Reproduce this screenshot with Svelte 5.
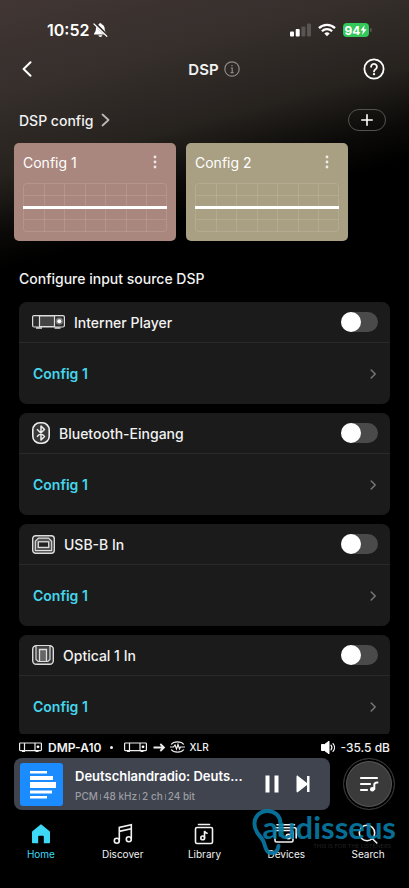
<script lang="ts">
	interface Source {
		id: string;
		name: string;
		config: string;
		enabled: boolean;
	}

	const configs = [
		{ name: 'Config 1', tone: 'rose' },
		{ name: 'Config 2', tone: 'sand' }
	];

	let sources = $state<Source[]>([
		{ id: 'player', name: 'Interner Player', config: 'Config 1', enabled: false },
		{ id: 'bluetooth', name: 'Bluetooth-Eingang', config: 'Config 1', enabled: false },
		{ id: 'usb', name: 'USB-B In', config: 'Config 1', enabled: false },
		{ id: 'optical', name: 'Optical 1 In', config: 'Config 1', enabled: false }
	]);

	const format = ['PCM', '48 kHz', '2 ch', '24 bit'];
	const tabs = ['Home', 'Discover', 'Library', 'Devices', 'Search'];
	let activeTab = $state('Home');
</script>

{#snippet device()}
	<svg class="line" width="23" height="11" viewBox="0 0 23 11" aria-hidden="true">
		<rect x="0.6" y="1" width="21.8" height="7.6" rx="0.8" />
		<path d="M5.5 1v7.6M16 1v7.6M3 9.4h3M16.5 9.4h3" />
		<circle cx="19" cy="4.8" r="1.4" fill="#fff" stroke="none" />
	</svg>
{/snippet}

<div class="screen">
	<div class="scroll">
		<div class="status">
			<div class="clock">
				<span>10:52</span>
				<svg width="15" height="16" viewBox="0 0 15 16" aria-hidden="true">
					<path d="M7.3 1.2c.9 0 1.3.5 1.4 1.1 2 .7 2.9 2.2 3 4.4.1 2.5.8 3.6 1.8 4.7.4.5.1 1.1-.5 1.1H1.6c-.6 0-.9-.6-.5-1.1 1-1.1 1.7-2.2 1.8-4.7.1-2.2 1-3.7 3-4.4.1-.6.5-1.1 1.4-1.1zM5.4 13.3h3.9c-.2 1-.9 1.7-1.95 1.7s-1.75-.7-1.95-1.7z" fill="#fff" />
					<path d="M1.7 1.3l12.5 12.5" stroke="#362d2a" stroke-width="3" />
					<path d="M1 2l12.8 12.3" stroke="#fff" stroke-width="1.2" stroke-linecap="round" />
				</svg>
			</div>
			<div class="signals">
				<svg width="21" height="14" viewBox="0 0 21 14" aria-hidden="true">
					<rect x="0" y="8.5" width="4" height="5" rx="1" fill="#fff" />
					<rect x="5.7" y="6" width="4" height="7.5" rx="1" fill="#fff" />
					<rect x="11.4" y="3.5" width="4" height="10" rx="1" fill="#5a5552" />
					<rect x="17" y="0.5" width="4" height="13" rx="1" fill="#5a5552" />
				</svg>
				<svg width="18" height="14" viewBox="0 0 18 14" fill="none" stroke="#fff" stroke-width="2.3" aria-hidden="true">
					<path d="M1 5.1a11.3 11.3 0 0 1 16 0M3.9 8.2a7.2 7.2 0 0 1 10.2 0" />
					<path d="M9 13.3l-2.7-2.8a3.9 3.9 0 0 1 5.4 0z" fill="#fff" stroke="none" />
				</svg>
				<div class="battery">
					<span>94</span>
					<svg width="7" height="10" viewBox="0 0 7 10" aria-hidden="true"><path d="M4.6 0L.5 5.6h2.4L2.2 10l4.4-5.7H4z" fill="#fff" /></svg>
				</div>
			</div>
		</div>

		<header class="nav">
			<button class="icon-btn" aria-label="Back">
				<svg width="10" height="16" viewBox="0 0 10 16" fill="none" stroke="#fff" stroke-width="2" stroke-linecap="round" stroke-linejoin="round"><path d="M8.5 1.3L1.6 8l6.9 6.7" /></svg>
			</button>
			<h1>
				DSP
				<button class="icon-btn" aria-label="Info">
					<svg width="16" height="16" viewBox="0 0 16 16" fill="none" stroke="#8e8a87" stroke-width="1.2"><circle cx="8" cy="8" r="7.2" /><path d="M6.9 7h1.3v4.6M6.6 11.6h3.1M8 3.9v1.4" /></svg>
				</button>
			</h1>
			<button class="icon-btn" aria-label="Help">
				<svg width="22" height="22" viewBox="0 0 22 22" fill="none" stroke="#fff" stroke-width="1.8"><circle cx="11" cy="11" r="9.6" /><path d="M8.1 8.8a2.9 2.9 0 1 1 4.5 2.4c-1 .7-1.6 1.1-1.6 2.2" stroke-linecap="round" /><circle cx="11" cy="16.1" r="1.2" fill="#fff" stroke="none" /></svg>
			</button>
		</header>

		<div class="section-row">
			<a class="section-link" href="#configs">
				DSP config
				<svg width="9" height="14" viewBox="0 0 9 14" fill="none" stroke="#bab7b5" stroke-width="1.8" stroke-linecap="round" stroke-linejoin="round"><path d="M1.5 1.5L7.5 7l-6 5.5" /></svg>
			</a>
			<button class="add" aria-label="Add config">
				<svg width="12" height="12" viewBox="0 0 12 12" stroke="#fff" stroke-width="1.6" stroke-linecap="round"><path d="M6 .8v10.4M.8 6h10.4" /></svg>
			</button>
		</div>

		<div class="configs" id="configs">
			{#each configs as config}
				<article class="config {config.tone}">
					<div class="config-head">
						<h3>{config.name}</h3>
						<button class="icon-btn" aria-label="{config.name} options">
							<svg width="4" height="14" viewBox="0 0 4 14" fill="#fff" fill-opacity="0.8"><circle cx="2" cy="2" r="1.4" /><circle cx="2" cy="7" r="1.4" /><circle cx="2" cy="12" r="1.4" /></svg>
						</button>
					</div>
					<svg class="graph" viewBox="0 0 144 50" aria-hidden="true">
						<g fill="none" stroke="#fff" stroke-opacity="0.12">
							<rect x="0.5" y="0.5" width="143" height="48" rx="3" />
							{#each [1, 2, 3, 4, 5, 6] as col}
								<path d="M{Math.round(col * 20.5) + 0.5} 0.5v48" />
							{/each}
							<path d="M0.5 12.5h143M0.5 36.5h143" />
						</g>
						<path d="M0 24.5h144" stroke="#fff" stroke-width="3" />
					</svg>
				</article>
			{/each}
		</div>

		<h2>Configure input source DSP</h2>

		<div class="sources">
			{#each sources as source (source.id)}
				<section class="source">
					<label class="source-head">
						{#if source.id === 'player'}
							<svg width="33" height="14" viewBox="0 0 33 14" fill="none" stroke="#ddd" aria-hidden="true">
								<rect x="0.6" y="0.6" width="31.8" height="11.4" rx="1.5" fill="#2c2c2c" stroke-width="1.2" />
								<path d="M7.5 1h15v10.5h-15z" fill="#444" stroke-width="1.2" />
								<path d="M4 13h6M22.5 13h6" stroke-width="1.4" />
								<circle cx="27.3" cy="6.2" r="3.6" fill="#777" stroke="none" />
								<circle cx="27.3" cy="6.2" r="2" fill="#fff" stroke="none" />
							</svg>
						{:else if source.id === 'bluetooth'}
							<svg width="18" height="22" viewBox="0 0 18 22" fill="none" stroke="#eee" aria-hidden="true">
								<rect x="0.8" y="0.8" width="16.4" height="20.4" rx="7" fill="#3a3a3a" stroke-width="1.6" />
								<path d="M5 7.3l7.5 7.2L9 18V4l3.5 3.5L5 14.7" stroke-width="1.5" stroke-linejoin="round" />
							</svg>
						{:else if source.id === 'usb'}
							<svg width="23" height="19" viewBox="0 0 23 19" fill="none" stroke="#ddd" aria-hidden="true">
								<rect x="0.7" y="0.7" width="21.6" height="17.6" rx="3" fill="#333" stroke-width="1.4" />
								<path d="M3.3 15.6V6.3l3.2-3.2h10l3.2 3.2v9.3z" fill="#555" stroke-width="1.2" />
								<rect x="6.3" y="6.8" width="10.4" height="5.6" fill="#222" stroke-width="1.3" />
							</svg>
						{:else}
							<svg width="22" height="20" viewBox="0 0 22 20" fill="none" stroke="#ddd" aria-hidden="true">
								<rect x="0.7" y="0.7" width="20.6" height="18.6" rx="3.5" fill="#333" stroke-width="1.4" />
								<path d="M4 1v13.5l2.2 2h9.6l2.2-2V1" fill="#444" stroke-width="1.2" />
								<path d="M7.5 16V4.5h7V16" fill="#666" stroke-width="1.3" />
							</svg>
						{/if}
						<span>{source.name}</span>
						<input type="checkbox" role="switch" bind:checked={source.enabled} />
					</label>
					<button class="source-config">
						{source.config}
						<svg width="7" height="10" viewBox="0 0 7 10" fill="none" stroke="#777" stroke-width="1.5" stroke-linecap="round" stroke-linejoin="round"><path d="M1.2 1l4 4-4 4" /></svg>
					</button>
				</section>
			{/each}
		</div>
	</div>

	<footer>
		<div class="output">
			{@render device()}
			<strong>DMP-A10</strong>
			<span class="dot"></span>
			{@render device()}
			<svg class="line arrow" width="12" height="9" viewBox="0 0 12 9" aria-hidden="true"><path d="M0.5 4.5h10.5M7.3 1l3.7 3.5L7.3 8" /></svg>
			<svg class="line" width="15" height="12" viewBox="0 0 15 12" aria-hidden="true">
				<path d="M1.2 3.5C2.5 1.6 4.7.8 7.5.8s5 .8 6.3 2.7M1.2 8.5c1.3 1.9 3.5 2.7 6.3 2.7s5-.8 6.3-2.7M0 6h3.5L5 4l1.5 4L8 3.5 9.5 8l1-2H15" />
			</svg>
			<span class="port">XLR</span>
			<div class="volume">
				<svg width="15" height="13" viewBox="0 0 15 13" fill="none" stroke="#fff" aria-hidden="true">
					<path d="M0.5 3.5h3L8 .2v12.6L3.5 9.5h-3z" fill="#fff" stroke-linejoin="round" />
					<path d="M10 4.2c1 1.3 1 3.3 0 4.6M12 2.6c2 2.2 2 5.6 0 7.8" stroke-width="1.2" stroke-linecap="round" />
				</svg>
				-35.5 dB
			</div>
		</div>

		<div class="playback">
			<div class="player">
				<svg width="43" height="43" viewBox="0 0 43 43" aria-hidden="true">
					<rect width="43" height="43" rx="3" fill="#1a8cff" />
					<path d="M10 8h17v2.5H10zM10 13h23v4H10zM10 19h26v6H10zM10 27.5h22v3H10zM10 33h17v2.5H10z" fill="#fff" />
				</svg>
				<div class="track">
					<p class="title">Deutschlandradio: Deuts...</p>
					<p class="format">
						{#each format as part}<span>{part}</span>{/each}
					</p>
				</div>
				<button class="icon-btn" aria-label="Pause">
					<svg width="14" height="18" viewBox="0 0 14 18" fill="#fff"><rect x="0.5" y="0.5" width="4" height="17" /><rect x="9.5" y="0.5" width="4" height="17" /></svg>
				</button>
				<button class="icon-btn" aria-label="Next">
					<svg width="14" height="18" viewBox="0 0 14 18" fill="#fff"><path d="M0.5 1.7C.5.6 1.3.3 2 .9L11 8V1h2.5v16H11v-7l-9 7.1c-.7.6-1.5.3-1.5-.8z" /></svg>
				</button>
			</div>
			<button class="queue" aria-label="Queue">
				<svg width="20" height="18" viewBox="0 0 20 18" fill="none" stroke="#fff" stroke-width="2.2" stroke-linecap="round">
					<path d="M2 3h16M2 9h9M2 15h6" />
					<path d="M18.5 7.6c-2 .2-3.2.6-3.2 2V14" stroke-width="2" />
					<circle cx="13.3" cy="14.3" r="2.3" fill="#fff" stroke="none" />
				</svg>
			</button>
		</div>

		<nav class="tabs">
			{#each tabs as tab}
				<button class="tab" class:active={tab === activeTab} onclick={() => (activeTab = tab)}>
					<svg width="24" height="22" viewBox="0 0 24 22" aria-hidden="true">
						{#if tab === 'Home'}
							<path d="M12 1.5c.4 0 .7.1 1 .4l7.3 6c.5.4.7.8.7 1.4v9.9c0 .6-.4 1-1 1h-5.200v-6.500c0-.6-.4-1-1-1h-3.600c-.6 0-1 .4-1 1v6.500H4c-.6 0-1-.4-1-1V9.300c0-.6.2-1 .7-1.400l7.300-6c.3-.3.6-.4 1-.4z" fill="currentColor" stroke="none" />
						{:else if tab === 'Discover'}
							<path d="M8.3 17.6V4.4l12-2.6v14M8.3 8.4l12-2.6" />
							<circle cx="5.8" cy="17.8" r="2.5" />
							<circle cx="17.8" cy="16.2" r="2.5" />
						{:else if tab === 'Library'}
							<path d="M6.5 1.5h11" />
							<rect x="3.5" y="4.5" width="17" height="16" rx="1.5" />
							<path d="M12.5 14.8V8c.3 1.4 1 2 2.6 2.2" />
							<circle cx="10.7" cy="14.9" r="1.9" />
						{:else if tab === 'Devices'}
							<path d="M1.5 4.8h19.4c.8 0 1.3.5 1.3 1.3V15M3 1.8h17.5" />
							<rect x="1" y="7.5" width="18" height="11.5" rx="1.5" />
							<circle cx="14.4" cy="13.6" r="2.2" />
							<path d="M15.8 12l1.7-2" />
						{:else}
							<circle cx="11" cy="10" r="7.7" />
							<path d="M16.5 15.7l4.3 4.3" />
						{/if}
					</svg>
					<span>{tab}</span>
				</button>
			{/each}
		</nav>

		<div class="brand">
			<svg width="36" height="48" viewBox="0 0 36 48" fill="none" stroke="currentColor" stroke-width="4" stroke-linecap="round" aria-hidden="true">
				<path d="M29.5 27V16C29.5 7.5 23.5 3 16.5 3 9 3 3.5 8.5 3.5 16c0 9 6 11 9 17.500 2 5 2 11.500 8.500 11.500 4 0 5.800-2.500 6.500-7" />
			</svg>
			<div class="brand-text">
				<span class="brand-name">audisseus</span>
				<span class="brand-tag">THIS IS FOR THE LISTENERS</span>
			</div>
		</div>
	</footer>
</div>

<style>
	:global(body) {
		margin: 0;
		background: #000;
	}

	.screen {
		display: flex;
		flex-direction: column;
		height: 100vh;
		overflow: hidden;
		color: #f2f2f2;
		font-family: Inter, 'Liberation Sans', sans-serif;
		font-size: 14px;
		font-weight: 500;
		background: linear-gradient(165deg, #413634 0, #362f2c 90px, #26221e 170px, #0b0a08 225px, #000 260px);
	}

	.screen * {
		box-sizing: border-box;
	}

	svg {
		display: block;
		flex: none;
	}

	button {
		padding: 0;
		border: 0;
		background: none;
		color: inherit;
		font: inherit;
		cursor: pointer;
	}

	h1, h2, h3, p {
		margin: 0;
		font-weight: inherit;
	}

	.scroll {
		flex: 1;
		min-height: 0;
		overflow: hidden auto;
		scrollbar-width: none;
	}

	.icon-btn {
		display: grid;
		place-items: center;
	}

	/* Status bar */
	.status {
		display: flex;
		align-items: center;
		justify-content: space-between;
		height: 20px;
		margin-top: 20px;
		padding: 0 37px 0 47px;
	}

	.clock, .signals {
		display: flex;
		align-items: center;
	}

	.clock {
		gap: 4px;
		color: #fff;
		font-size: 16px;
		font-weight: 600;
	}

	.signals {
		gap: 7px;
	}

	.battery {
		position: relative;
		display: flex;
		align-items: center;
		justify-content: center;
		width: 26px;
		height: 14px;
		margin-right: 3px;
		border-radius: 4px;
		background: #34c759;
		color: #fff;
		font-size: 12px;
		font-weight: 700;
	}

	.battery::after {
		content: '';
		position: absolute;
		top: 5px;
		right: -3px;
		width: 2px;
		height: 4px;
		border-radius: 0 2px 2px 0;
		background: #5a5552;
	}

	/* Header */
	.nav {
		display: grid;
		grid-template-columns: 1fr auto 1fr;
		align-items: center;
		height: 34px;
		margin-top: 12px;
		padding: 0 24px 0 22px;
	}

	.nav > :first-child {
		justify-self: start;
	}

	.nav > :last-child {
		justify-self: end;
	}

	h1 {
		display: flex;
		align-items: center;
		gap: 5px;
		/* balances the info button so the word itself is centred */
		padding-left: 21px;
		font-size: 15px;
		font-weight: 600;
	}

	.section-row {
		display: flex;
		align-items: center;
		justify-content: space-between;
		height: 22px;
		margin: 23px 23px 0 19px;
	}

	.section-link {
		display: flex;
		align-items: center;
		gap: 8px;
		color: inherit;
		text-decoration: none;
	}

	.add {
		display: grid;
		place-items: center;
		width: 38px;
		height: 22px;
		border: 1px solid #55524f;
		border-radius: 11px;
	}

	/* Config cards */
	.configs {
		display: flex;
		gap: 10px;
		margin-top: 12px;
		padding: 0 14px;
		overflow-x: auto;
		scrollbar-width: none;
	}

	.config {
		flex: 0 0 162px;
		padding: 9px 9px 8px;
		border-radius: 5px;
	}

	.rose {
		background: #a9877e;
	}

	.sand {
		background: #a99f83;
	}

	.config-head {
		display: flex;
		align-items: center;
		justify-content: space-between;
		height: 20px;
		margin-bottom: 11px;
		padding-right: 10px;
	}

	h3 {
		color: #fff;
		font-size: 14px;
		font-weight: 400;
	}

	.graph {
		width: 100%;
	}

	/* Input sources */
	h2 {
		margin: 28px 19px 13px;
		font-size: 14px;
		line-height: 20px;
	}

	.sources {
		display: flex;
		flex-direction: column;
		gap: 9px;
		padding: 0 19px 20px;
	}

	.source {
		border-radius: 8px;
		background: #1b1b1b;
	}

	.source-head {
		display: flex;
		align-items: center;
		gap: 9px;
		height: 41px;
		padding: 0 12px 0 13px;
		border-bottom: 1px solid #292929;
	}

	.source-head input {
		appearance: none;
		width: 37px;
		height: 20px;
		margin: 0 0 0 auto;
		border-radius: 10px;
		background: #4a4a4a;
		cursor: pointer;
	}

	.source-head input::before {
		content: '';
		display: block;
		width: 20px;
		height: 20px;
		border-radius: 50%;
		background: #fff;
		transition: margin 0.2s ease;
	}

	.source-head input:checked {
		background: #3dd8f5;
	}

	.source-head input:checked::before {
		margin-left: 17px;
	}

	.source-config {
		display: flex;
		align-items: center;
		justify-content: space-between;
		width: 100%;
		height: 61px;
		padding: 0 13px 0 14px;
		color: #45d5ec;
		font-size: 14px;
		font-weight: 600;
	}

	/* Footer */
	footer {
		position: relative;
		background: #000;
	}

	.output {
		display: flex;
		align-items: center;
		height: 24px;
		padding: 2px 19px 0;
		font-size: 12px;
	}

	.line {
		fill: none;
		stroke: #eee;
		stroke-width: 1.2;
	}

	.output strong {
		margin-left: 6px;
		font-weight: 600;
	}

	.dot {
		width: 3px;
		height: 3px;
		margin: 0 11px 0 8px;
		border-radius: 50%;
		background: #eee;
	}

	.arrow {
		margin: 0 5px 0 6px;
		stroke-width: 1.8;
	}

	.port {
		margin-left: 5px;
		font-size: 10px;
	}

	.volume {
		display: flex;
		align-items: center;
		gap: 5px;
		margin-left: auto;
	}

	.playback {
		display: flex;
		align-items: center;
		gap: 13px;
		padding: 0 14px;
	}

	.player {
		flex: 1;
		display: flex;
		align-items: center;
		min-width: 0;
		height: 52px;
		padding: 0 20px 0 6px;
		border-radius: 8px;
		background: #40444f;
	}

	.player .icon-btn + .icon-btn {
		margin-left: 17px;
	}

	.track {
		flex: 1;
		min-width: 0;
		margin: 0 12px;
	}

	.title {
		overflow: hidden;
		color: #fff;
		font-size: 13px;
		font-weight: 600;
		line-height: 20px;
		white-space: nowrap;
		text-overflow: ellipsis;
	}

	.format {
		display: flex;
		align-items: center;
		margin-top: 4px;
		color: #9b9da3;
		font-size: 10px;
		line-height: 12px;
		white-space: nowrap;
	}

	.format span + span::before {
		content: '';
		display: inline-block;
		width: 1px;
		height: 6px;
		margin: 0 2px;
		background: #7b7e86;
	}

	.queue {
		display: grid;
		place-items: center;
		width: 52px;
		height: 52px;
		border: 1px solid #353535;
		border-radius: 50%;
		background: #3a3a3a;
		box-shadow: inset 0 0 0 2px #000, inset 0 0 0 3px #555;
	}

	.tabs {
		display: flex;
		height: 78px;
		padding-top: 13px;
	}

	.tab {
		flex: 1;
		display: flex;
		flex-direction: column;
		align-items: center;
		gap: 2px;
		font-size: 10px;
		font-weight: 400;
		line-height: 14px;
	}

	.tab svg {
		fill: none;
		stroke: currentColor;
		stroke-width: 1.6;
		stroke-linecap: round;
	}

	.tab.active {
		color: #3dd8f5;
	}

	/* Brand stamp over the tab bar */
	.brand {
		position: absolute;
		right: 13px;
		bottom: 32px;
		display: flex;
		color: #087ba7;
		opacity: 0.9;
		pointer-events: none;
	}

	.brand-text {
		display: flex;
		flex-direction: column;
		align-items: flex-end;
		margin: 5px 0 0 -25px;
	}

	.brand-name {
		font-family: Lato, sans-serif;
		font-size: 31px;
		font-weight: 700;
		line-height: 29px;
	}

	.brand-tag {
		margin-right: 5px;
		color: #222;
		font-family: Lato, sans-serif;
		font-size: 6px;
		line-height: 7px;
	}
</style>
